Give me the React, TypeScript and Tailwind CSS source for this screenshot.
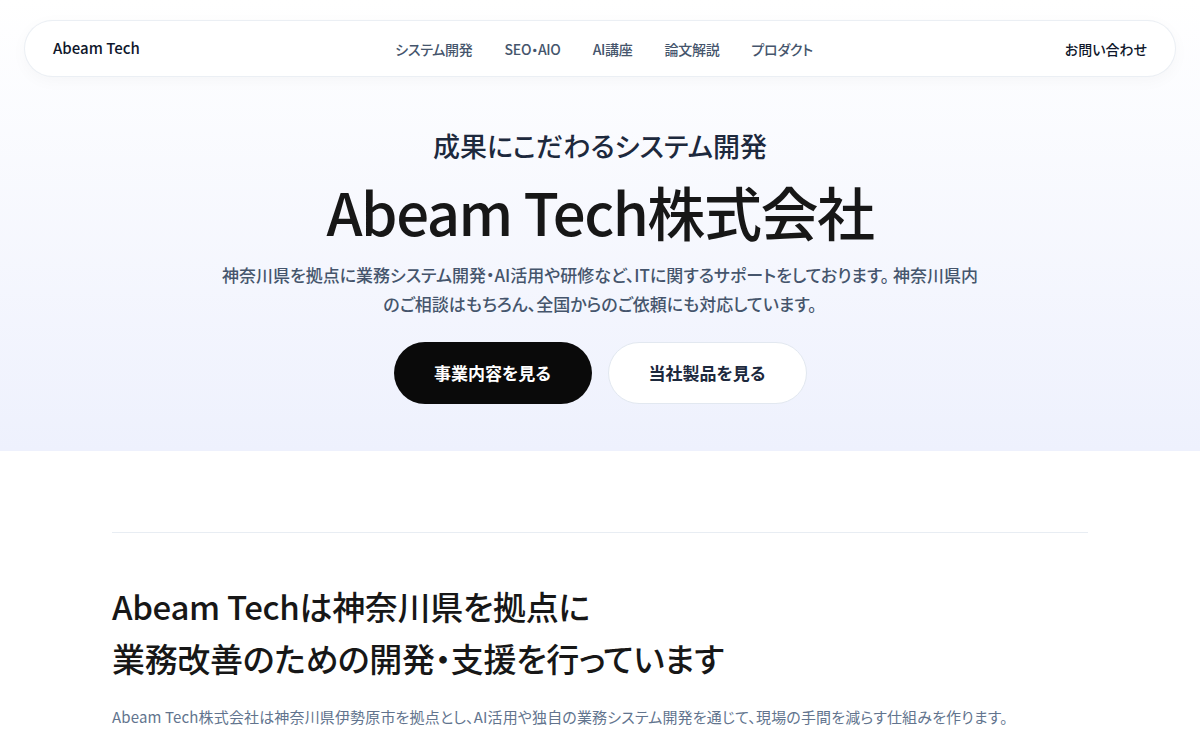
import React from 'react'

const navItems = ['システム開発', 'SEO・AIO', 'AI講座', '論文解説', 'プロダクト']

function Header() {
  return (
    <header className="px-6 pt-5">
      <div className="grid h-[57px] grid-cols-3 items-center rounded-full border border-slate-200/70 bg-white px-7 shadow-[0_4px_16px_rgba(15,23,42,0.03)]">
        <a className="text-[15px] font-medium text-slate-900">Abeam Tech</a>
        <nav className="flex items-center justify-center gap-8 pl-2">
          {navItems.map((item) => (
            <a key={item} className="whitespace-nowrap text-sm font-medium tracking-[-0.02em] text-slate-600">
              {item}
            </a>
          ))}
        </nav>
        <a className="justify-self-end text-sm font-medium text-slate-900">お問い合わせ</a>
      </div>
    </header>
  )
}

function Hero() {
  return (
    <section className="bg-gradient-to-b from-white to-[#eef1fd] pb-[47px]">
      <Header />
      <div className="flex flex-col items-center pt-[49px] text-center">
        <p className="text-[27px] font-medium leading-[40px] text-slate-800">成果にこだわるシステム開発</p>
        <h1 className="mt-[5px] text-[58px] font-medium leading-[80px] tracking-[-0.025em] text-neutral-900">Abeam Tech株式会社</h1>
        <p className="mt-[9px] max-w-[762px] text-[17px] font-medium leading-[29px] text-slate-600">
          神奈川県を拠点に業務システム開発・AI活用や研修など、ITに関するサポートをしております。 神奈川県内のご相談はもちろん、全国からのご依頼にも対応しています。
        </p>
        <div className="mt-[24px] flex gap-4">
          <button className="h-[62px] w-[198px] rounded-full bg-neutral-950 text-[17px] font-bold text-white">
            事業内容を見る
          </button>
          <button className="h-[62px] w-[199px] rounded-full border border-slate-200 bg-white text-[17px] font-bold text-slate-800">
            当社製品を見る
          </button>
        </div>
      </div>
    </section>
  )
}

function About() {
  return (
    <section className="bg-white px-[112px] pt-[81px]">
      <div className="border-t border-slate-200/80 pt-[47px]">
        <h2 className="text-[33px] font-medium leading-[52px] tracking-[-0.01em] text-neutral-900">
          Abeam Techは神奈川県を拠点に
          <br />
          業務改善のための開発・支援を行っています
        </h2>
        <p className="mt-[20px] text-[15px] leading-[26px] tracking-[0.01em] text-slate-500">
          Abeam Tech株式会社は神奈川県伊勢原市を拠点とし、AI活用や独自の業務システム開発を通じて、現場の手間を減らす仕組みを作ります。
        </p>
      </div>
    </section>
  )
}

export default function App() {
  return (
    <div className="min-h-screen bg-white font-['Noto_Sans_CJK_JP','Noto_Sans',sans-serif] [font-feature-settings:'palt']">
      <Hero />
      <About />
    </div>
  )
}
